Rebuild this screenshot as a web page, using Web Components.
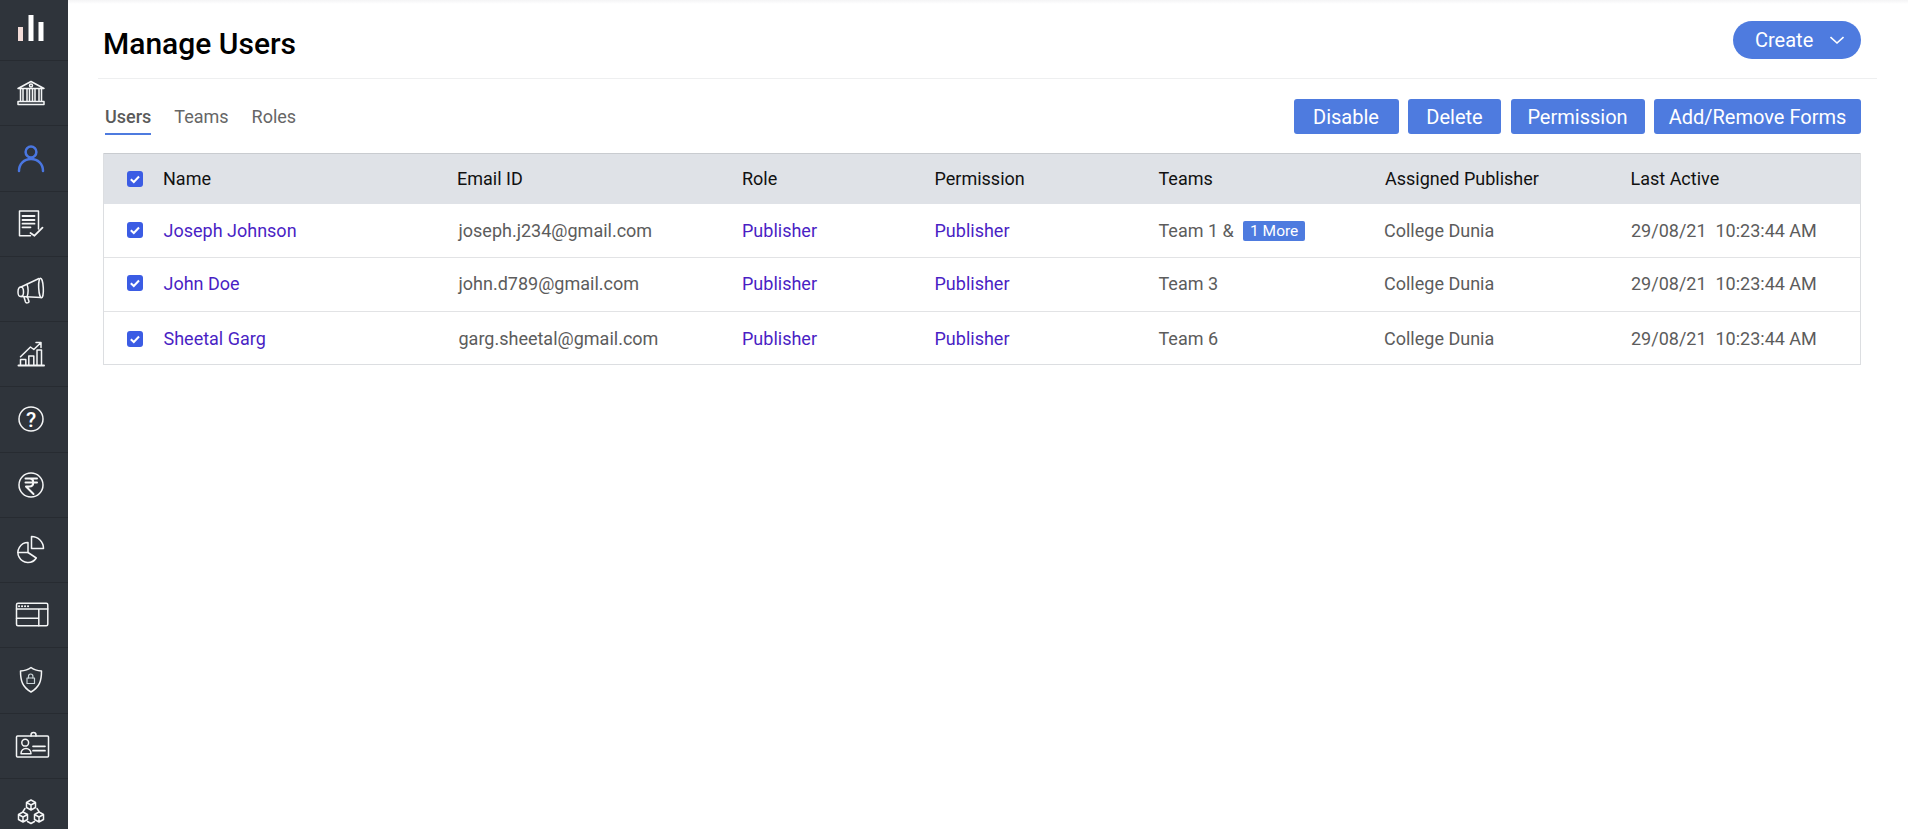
<!DOCTYPE html>
<html>
<head>
<meta charset="utf-8">
<title>Manage Users</title>
<style>
    html, body { margin: 0; height: 100%; background: #fff; overflow: hidden; }
    body { font-family: Roboto, "Liberation Sans", sans-serif; }
</style>
</head>
<body>
<app-shell>
    <side-nav slot="nav"></side-nav>
    <page-header>
        <span slot="title">Manage Users</span>
        <create-button>Create</create-button>
    </page-header>
    <tool-bar>
        <tab-item active>Users</tab-item>
        <tab-item>Teams</tab-item>
        <tab-item>Roles</tab-item>
        <action-button slot="actions" w="105">Disable</action-button>
        <action-button slot="actions" w="93">Delete</action-button>
        <action-button slot="actions" w="134">Permission</action-button>
        <action-button slot="actions" w="207">Add/Remove Forms</action-button>
    </tool-bar>
    <users-table>
        <head-row>
            <check-box></check-box>
            <table-cell>Name</table-cell>
            <table-cell>Email ID</table-cell>
            <table-cell>Role</table-cell>
            <table-cell>Permission</table-cell>
            <table-cell>Teams</table-cell>
            <table-cell>Assigned Publisher</table-cell>
            <table-cell>Last Active</table-cell>
        </head-row>
        <user-row h="54" top="0" bottom="1">
            <check-box></check-box>
            <table-cell kind="link">Joseph Johnson</table-cell>
            <table-cell kind="text">joseph.j234@gmail.com</table-cell>
            <table-cell kind="link">Publisher</table-cell>
            <table-cell kind="link">Publisher</table-cell>
            <table-cell kind="text">Team 1 &amp; <more-badge>1 More</more-badge></table-cell>
            <table-cell kind="text">College Dunia</table-cell>
            <table-cell kind="text">29/08/21&nbsp; 10:23:44 AM</table-cell>
        </user-row>
        <user-row h="54" top="0" bottom="3">
            <check-box></check-box>
            <table-cell kind="link">John Doe</table-cell>
            <table-cell kind="text">john.d789@gmail.com</table-cell>
            <table-cell kind="link">Publisher</table-cell>
            <table-cell kind="link">Publisher</table-cell>
            <table-cell kind="text">Team 3</table-cell>
            <table-cell kind="text">College Dunia</table-cell>
            <table-cell kind="text">29/08/21&nbsp; 10:23:44 AM</table-cell>
        </user-row>
        <user-row h="52" top="1" bottom="0">
            <check-box></check-box>
            <table-cell kind="link">Sheetal Garg</table-cell>
            <table-cell kind="text">garg.sheetal@gmail.com</table-cell>
            <table-cell kind="link">Publisher</table-cell>
            <table-cell kind="link">Publisher</table-cell>
            <table-cell kind="text">Team 6</table-cell>
            <table-cell kind="text">College Dunia</table-cell>
            <table-cell kind="text">29/08/21&nbsp; 10:23:44 AM</table-cell>
        </user-row>
    </users-table>
</app-shell>

<script>
const ICONS = {
    bars: `<g fill="#fff" stroke="none"><rect x="7" y="17" width="5" height="14" fill="#f3dcd8"/><rect x="17.5" y="5" width="5" height="26"/><rect x="27.5" y="12" width="5" height="19"/></g>`,
    bank: `<path d="M7 15.5 20 8.5l13 7Z"/><circle cx="20" cy="12.6" r="1.5"/><path d="M9.5 16v12M12 16v12M16 16v12M18.5 16v12M21.5 16v12M24 16v12M28 16v12M30.5 16v12"/><rect x="7" y="28.5" width="26" height="3"/>`,
    user: `<g stroke="#4a76e0" stroke-width="2.5"><circle cx="20" cy="14" r="5.4"/><path d="M8 33c0-7 5-12 12-12s12 5 12 12"/></g>`,
    form: `<path d="M27.500 25V7H8.500v24.700H19.500"/><path d="M11.500 12h12M11.500 16h12M11.500 19.700h12M11.500 23.300h8" stroke-width="1.800"/><path d="m19.500 29 4 2.700 8-8" stroke-width="1.800"/>`,
    horn: `<path d="M10 18c-2 0-3 1-3 5s1 4.500 3 4.500c1.500 0 2.500-2 2.500-4.500S11.500 18 10 18Z"/><path d="M10 18 28 9.500M10 27.500l20 1"/><ellipse cx="30" cy="19" rx="2.300" ry="9.700" transform="rotate(-3 30 19)"/><path d="M16 15.500c1.500 3 1.500 9 0 12.500"/><path d="m13 28 1.500 5c.6 1.500 3.500 1 3.500-.5l-1.500-4.500"/>`,
    growth: `<path d="M7.500 31.500h25.500" stroke-width="2"/><path d="M9.500 31v-5.500h5.300V31M17.800 31v-9h5v9M26 31V16h4.500v15"/><path d="m9.500 22.800 10-9.800 3.300 2.500 6.700-6.500M25 8.500h5v5" stroke-width="1.500"/>`,
    help: `<circle cx="20" cy="20" r="12"/><text x="20" y="27.500" text-anchor="middle" font-family="Roboto, sans-serif" font-size="21" font-weight="500" fill="#fff" stroke="none">?</text>`,
    rupee: `<circle cx="20" cy="20" r="12"/><path d="M14.500 13.500h11.500M14.500 17.500h11.500M15 13.500h3.500c5 0 5 8 0 8H15l7.500 7.500" stroke-width="2"/>`,
    pie: `<path d="M17 12.500a10 10 0 1 0 8.300 15.500L17 22.500Z"/><path d="M20.500 6.500v12h12a12 12 0 0 0-12-12Z"/><path d="M7 22.500h10"/>`,
    browser: `<rect x="5.500" y="8.300" width="31.300" height="22.500" rx="1.500"/><path d="M5.500 14h31.300M27.800 14v16.800M5.500 23.300h22.300"/><path d="M8 11.200h.1M11 11.200h.1M14 11.200h.1M17 11.200h.1" stroke-width="2"/>`,
    shield: `<path d="M20 7.500c3 2.500 6.500 3.300 10.500 3.500 0 10-2 16-10.500 21-8.500-5-10.500-11-10.500-21 4-.2 7.500-1 10.500-3.500Z"/><g stroke="#c9d3d8" stroke-width="1.200"><rect x="16" y="18" width="7.500" height="5.500"/><path d="M17.500 18v-1.800a2.200 2.200 0 0 1 4.400 0V18"/></g>`,
    badge: `<rect x="5.500" y="10" width="32" height="21" rx="1"/><path d="M20 10V9a2.500 2.500 0 0 1 5 0v1"/><circle cx="14.200" cy="16.700" r="3.400"/><path d="M10 27.700c0-7 10-7 10 0Z"/><path d="M22 20.300h12M22 24.700h12" stroke-width="1.700"/>`,
    cubes: `<g transform="translate(0 1)"><path d="m20 8 4.500 2.500v5L20 18l-4.500-2.500v-5ZM15.500 10.500 20 13l4.500-2.500M20 13v5"/><path d="m12 20 4.500 2.500v5L12 30l-4.500-2.500v-5ZM7.500 22.500 12 25l4.500-2.500M12 25v5"/><path d="m28 20 4.500 2.500v5L28 30l-4.500-2.500v-5ZM23.500 22.500 28 25l4.500-2.500M28 25v5"/><path d="M14 16.500l-2 3M26 16.500l2 3M16.500 29.500l3.500 2 3.500-2"/></g>`
};

class AppShell extends HTMLElement {
    constructor() {
        super();
        this.attachShadow({mode: 'open'});
        this.shadowRoot.innerHTML = `
            <style>
                :host { display: flex; width: 100%; height: 829px; overflow: hidden; position: relative; }
                main { flex: 1; min-width: 0; display: flex; flex-direction: column; padding-left: 30px; padding-right: 47px; }
                .shade { position: absolute; left: 68px; right: 0; top: 0; height: 4px; background: linear-gradient(#f4f4f5, #fff); }
            </style>
            <slot name="nav"></slot>
            <main><slot></slot></main>
            <div class="shade"></div>
        `;
    }
}

class SideNav extends HTMLElement {
    constructor() {
        super();
        this.attachShadow({mode: 'open'});
        let estilo = `
            <style>
                :host { display: block; width: 68px; flex: none; height: 829px; overflow: hidden; background: #2f343b; }
                .item { display: flex; justify-content: center; align-items: center; height: 64.25px; padding-right: 7px; border-bottom: 1px solid #272b31; }
                .item:first-of-type { height: 60px; }
                svg { width: 40px; height: 40px; fill: none; stroke: #f4f5f6; stroke-width: 1.5; stroke-linejoin: round; stroke-linecap: round; }
            </style>
        `;
        let items = ['bars', 'bank', 'user', 'form', 'horn', 'growth', 'help', 'rupee', 'pie', 'browser', 'shield', 'badge', 'cubes'];
        this.shadowRoot.innerHTML = estilo + items.map(i => `<div class="item"><svg viewBox="0 0 40 40">${ICONS[i]}</svg></div>`).join('');
    }
}

class PageHeader extends HTMLElement {
    constructor() {
        super();
        this.attachShadow({mode: 'open'});
        this.shadowRoot.innerHTML = `
            <style>
                :host { display: flex; justify-content: space-between; align-items: center; height: 78px; border-bottom: 1px solid #eeeff0; padding: 0 16px 0 5px; margin-right: -16px; flex: none; }
                .title { font-size: 30px; font-weight: 500; color: #000; margin-top: 8px; }
            </style>
            <div class="title"><slot name="title"></slot></div>
            <slot></slot>
        `;
    }
}

class CreateButton extends HTMLElement {
    constructor() {
        super();
        this.attachShadow({mode: 'open'});
        this.shadowRoot.innerHTML = `
            <style>
                :host { display: flex; align-items: center; box-sizing: border-box; width: 128px; height: 38px; margin-top: 2px; padding-left: 22px; border-radius: 19px; background: #4e7bdf; color: #fff; font-size: 20px; }
                svg { margin-left: 17px; width: 14px; height: 14px; fill: none; stroke: #fff; stroke-width: 1.6; }
            </style>
            <slot></slot>
            <svg viewBox="0 0 14 14"><path d="m.500 4 6.500 6L13.500 4"/></svg>
        `;
    }
}

class ToolBar extends HTMLElement {
    constructor() {
        super();
        this.attachShadow({mode: 'open'});
        this.shadowRoot.innerHTML = `
            <style>
                :host { display: flex; justify-content: space-between; height: 74px; flex: none; box-sizing: border-box; padding: 20px 0 0 7px; }
                .tabs { display: flex; gap: 23px; }
                .actions { display: flex; gap: 9.500px; }
            </style>
            <div class="tabs"><slot></slot></div>
            <div class="actions"><slot name="actions"></slot></div>
        `;
    }
}

class TabItem extends HTMLElement {
    constructor() {
        super();
        this.attachShadow({mode: 'open'});
        this.shadowRoot.innerHTML = `
            <style>
                :host { display: block; height: 36px; line-height: 36px; font-size: 18px; color: #666; box-sizing: border-box; }
                :host([active]) { font-weight: 500; color: #5a5a5a; border-bottom: 2px solid #4e7bdf; }
            </style>
            <slot></slot>
        `;
    }
}

class ActionButton extends HTMLElement {
    constructor() {
        super();
        this.attachShadow({mode: 'open'});
        this.shadowRoot.innerHTML = `
            <style>
                :host { display: flex; justify-content: center; align-items: center; height: 35px; border-radius: 3px; background: #4e7bdf; color: #fff; font-size: 20px; box-sizing: border-box; }
            </style>
            <slot></slot>
        `;
    }
    connectedCallback() {
        this.style.width = this.getAttribute('w') + 'px';
    }
}

class UsersTable extends HTMLElement {
    constructor() {
        super();
        this.attachShadow({mode: 'open'});
        this.shadowRoot.innerHTML = `
            <style>
                :host { display: block; margin-left: 5px; border: 1px solid #dcdee1; border-top: 0; flex: none; }
            </style>
            <slot></slot>
        `;
    }
}

class HeadRow extends HTMLElement {
    constructor() {
        super();
        this.attachShadow({mode: 'open'});
        this.shadowRoot.innerHTML = `
            <style>
                :host { display: grid; grid-template-columns: 59px 294px 285px 192.500px 224px 226.500px 245.500px 1fr; align-items: center; height: 51px; box-sizing: border-box; border-top: 1px solid #c9ccd0; padding-bottom: 1px; background: #dfe2e7; color: #111; font-size: 18px; }
            </style>
            <slot></slot>
        `;
    }
}

class UserRow extends HTMLElement {
    constructor() {
        super();
        this.attachShadow({mode: 'open'});
        this.shadowRoot.innerHTML = `
            <style>
                :host { display: grid; grid-template-columns: 59.500px 295px 283.500px 192.500px 224px 225.500px 247px 1fr; align-items: center; box-sizing: border-box; border-bottom: 1px solid #e2e3e5; font-size: 18px; }
                :host(:last-child) { border-bottom: 0; }
            </style>
            <slot></slot>
        `;
    }
    connectedCallback() {
        this.style.height = this.getAttribute('h') + 'px';
        this.style.paddingTop = this.getAttribute('top') + 'px';
        this.style.paddingBottom = this.getAttribute('bottom') + 'px';
    }
}

class TableCell extends HTMLElement {
    constructor() {
        super();
        this.attachShadow({mode: 'open'});
        this.shadowRoot.innerHTML = `
            <style>
                :host { display: block; white-space: nowrap; }
                :host([kind="link"]) { color: #4a1fc4; }
                :host([kind="text"]) { color: #5c5c5c; }
            </style>
            <slot></slot>
        `;
    }
}

class CheckBox extends HTMLElement {
    constructor() {
        super();
        this.attachShadow({mode: 'open'});
        this.shadowRoot.innerHTML = `
            <style>
                :host { display: block; width: 16px; height: 16px; margin-left: 23px; border-radius: 3px; background: #3b5ce4; }
                svg { display: block; width: 16px; height: 16px; fill: none; stroke: #fff; stroke-width: 2; }
            </style>
            <svg viewBox="0 0 16 16"><path d="m3.800 8.200 3 2.800 5.200-5.500"/></svg>
        `;
    }
}

class MoreBadge extends HTMLElement {
    constructor() {
        super();
        this.attachShadow({mode: 'open'});
        this.shadowRoot.innerHTML = `
            <style>
                :host { display: inline-block; width: 62px; height: 20px; margin-left: 5px; line-height: 20px; vertical-align: 1px; text-align: center; border-radius: 2px; background: #4e7bdf; color: #fff; font-size: 15.500px; }
            </style>
            <slot></slot>
        `;
    }
}

customElements.define('app-shell', AppShell);
customElements.define('side-nav', SideNav);
customElements.define('page-header', PageHeader);
customElements.define('create-button', CreateButton);
customElements.define('tool-bar', ToolBar);
customElements.define('tab-item', TabItem);
customElements.define('action-button', ActionButton);
customElements.define('users-table', UsersTable);
customElements.define('head-row', HeadRow);
customElements.define('user-row', UserRow);
customElements.define('table-cell', TableCell);
customElements.define('check-box', CheckBox);
customElements.define('more-badge', MoreBadge);
</script>
</body>
</html>
